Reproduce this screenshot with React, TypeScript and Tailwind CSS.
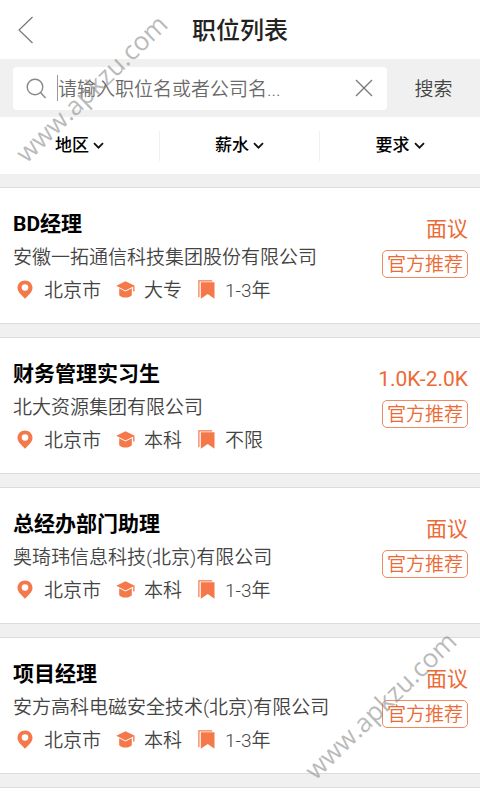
import React from "react";

type Job = {
  title: string;
  company: string;
  city: string;
  degree: string;
  years: string;
  salary: string;
};

const jobs: Job[] = [
  { title: "BD经理", company: "安徽一拓通信科技集团股份有限公司", city: "北京市", degree: "大专", years: "1-3年", salary: "面议" },
  { title: "财务管理实习生", company: "北大资源集团有限公司", city: "北京市", degree: "本科", years: "不限", salary: "1.0K-2.0K" },
  { title: "总经办部门助理", company: "奥琦玮信息科技(北京)有限公司", city: "北京市", degree: "本科", years: "1-3年", salary: "面议" },
  { title: "项目经理", company: "安方高科电磁安全技术(北京)有限公司", city: "北京市", degree: "本科", years: "1-3年", salary: "面议" },
];

const filters = ["地区", "薪水", "要求"];

function PinIcon() {
  return (
    <svg width="16" height="19" viewBox="0 0 16 19" fill="#f4784a" aria-hidden="true">
      <path fillRule="evenodd" d="M8 .5C3.800.5.5 3.700.5 7.700c0 2.300 1.200 4.200 2.700 6.100L8 18.800l4.800-5c1.500-1.900 2.700-3.800 2.700-6.100C15.500 3.700 12.200.5 8 .5Zm0 3.700a3.300 3.300 0 1 1 0 6.600 3.300 3.300 0 0 1 0-6.600Z" />
    </svg>
  );
}

function DegreeIcon() {
  return (
    <svg width="19" height="17" viewBox="0 0 19 17" fill="#f4784a" aria-hidden="true">
      <path d="M9.500.2 18.700 4.800 9.500 9.400.3 4.800Z" />
      <path d="M3.200 7.200 9.500 10.400l6.300-3.200v7c-1.500 1.500-3.700 2.300-6.300 2.300s-4.800-.8-6.300-2.300Z" />
      <path d="M17.200 5h1.300v5.500h-1.300Z" />
    </svg>
  );
}

function BookmarkIcon() {
  return (
    <svg width="17" height="19" viewBox="0 0 17 19" fill="#f4784a" aria-hidden="true">
      <path d="M.3.300h13.900v1.200H1.500v15.200l-1.200.8Z" />
      <path d="M2.800 2.300h13.700v16.400l-6.800-4.800-6.900 4.800Z" />
    </svg>
  );
}

function Meta({ icon, text }: { icon: React.ReactNode; text: string }) {
  return (
    <li className="flex items-center gap-[7px]">
      <span className="flex w-6 justify-center pb-[3px]">{icon}</span>
      {text}
    </li>
  );
}

function JobCard({ job }: { job: Job }) {
  return (
    <li className="flex justify-between border-y border-[#dcdcdc] bg-white pt-[21px] pr-3 pb-[18px] pl-[13px]">
      <div className="min-w-0">
        <h2 className="text-[21px] leading-[30px] font-bold text-black">{job.title}</h2>
        <p className="text-[19px] leading-[38px] font-[350] whitespace-nowrap text-[#444]">{job.company}</p>
        <ul className="flex gap-3 text-[19px] leading-7 font-[350] text-[#444]">
          <Meta icon={<PinIcon />} text={job.city} />
          <Meta icon={<DegreeIcon />} text={job.degree} />
          <Meta icon={<BookmarkIcon />} text={job.years} />
        </ul>
      </div>
      <div className="flex shrink-0 flex-col items-end gap-[7px] pt-[6px] text-[#ec6a35]">
        <span className="text-[21px] leading-7">{job.salary}</span>
        <span className="rounded-[5px] border border-[#f08a62] px-1 pt-px text-[19px] leading-[25px] font-[350]">官方推荐</span>
      </div>
    </li>
  );
}

function Watermark({ className }: { className: string }) {
  return (
    <span
      aria-hidden="true"
      className={`pointer-events-none absolute -translate-x-1/2 -translate-y-1/2 -rotate-44 font-['Open_Sans',sans-serif] text-[26px] leading-none text-[#8c8c8c]/60 ${className}`}
    >
      www.apkzu.com
    </span>
  );
}

export default function App() {
  return (
    <div className="relative flex min-h-screen flex-col overflow-hidden bg-[#f0f0f0] font-[Roboto,'Noto_Sans_CJK_SC',sans-serif]">
      <header className="grid h-[59px] grid-cols-[1fr_auto_1fr] items-center bg-white px-[17px]">
        <button type="button" aria-label="返回" className="w-fit">
          <svg width="17" height="28" viewBox="0 0 17 28" fill="none" stroke="#777" strokeWidth="1.200" aria-hidden="true">
            <path d="M15.500 1 2 14l13.500 13" />
          </svg>
        </button>
        <h1 className="pt-0.5 text-2xl font-medium text-[#222]">职位列表</h1>
      </header>

      <form className="flex h-[58px] items-center pl-[13px]" onSubmit={(e) => e.preventDefault()}>
        <div className="flex h-[43px] min-w-0 flex-1 items-center rounded-[4px] bg-white px-[13px]">
          <svg width="21" height="21" viewBox="0 0 21 21" fill="none" stroke="#888" strokeWidth="1.400" className="shrink-0" aria-hidden="true">
            <circle cx="9" cy="9" r="7.800" />
            <path d="m14.500 14.500 5 5.500" />
          </svg>
          <span className="ml-[10px] h-[26px] w-px shrink-0 bg-[#999]" />
          <input
            type="text"
            aria-label="职位名或者公司名"
            placeholder="请输入职位名或者公司名..."
            className="min-w-0 flex-1 bg-transparent pt-1 text-[19px] leading-7 font-[350] outline-none placeholder:text-[#6a6a6a]"
          />
          <button type="button" aria-label="清除" className="shrink-0">
            <svg width="20" height="20" viewBox="0 0 20 20" fill="none" stroke="#777" strokeWidth="1.300" aria-hidden="true">
              <path d="m2 2 16 16M18 2 2 18" />
            </svg>
          </button>
        </div>
        <button type="submit" className="w-[93px] pt-1 text-[19px] leading-7 font-[350] text-[#444]">搜索</button>
      </form>

      <nav className="grid h-[57px] grid-cols-3 items-center divide-x divide-[#f0f0f0] bg-white">
        {filters.map((name) => (
          <button key={name} type="button" aria-haspopup="listbox" className="flex h-[30px] items-center justify-center gap-1 text-[17px] font-medium text-black">
            {name}
            <svg width="11" height="8" viewBox="0 0 11 8" fill="none" stroke="#111" strokeWidth="1.800" aria-hidden="true">
              <path d="m1 1.200 4.500 4.500L10 1.200" />
            </svg>
          </button>
        ))}
      </nav>

      <ul className="mt-[13px] flex flex-col gap-[13px]">
        {jobs.map((job) => (
          <JobCard key={job.title} job={job} />
        ))}
      </ul>
      <div className="mt-[13px] min-h-3 flex-1 border-t border-[#dcdcdc] bg-white" />

      <Watermark className="top-[88px] left-[91px]" />
      <Watermark className="top-[705px] left-[380px]" />
    </div>
  );
}
